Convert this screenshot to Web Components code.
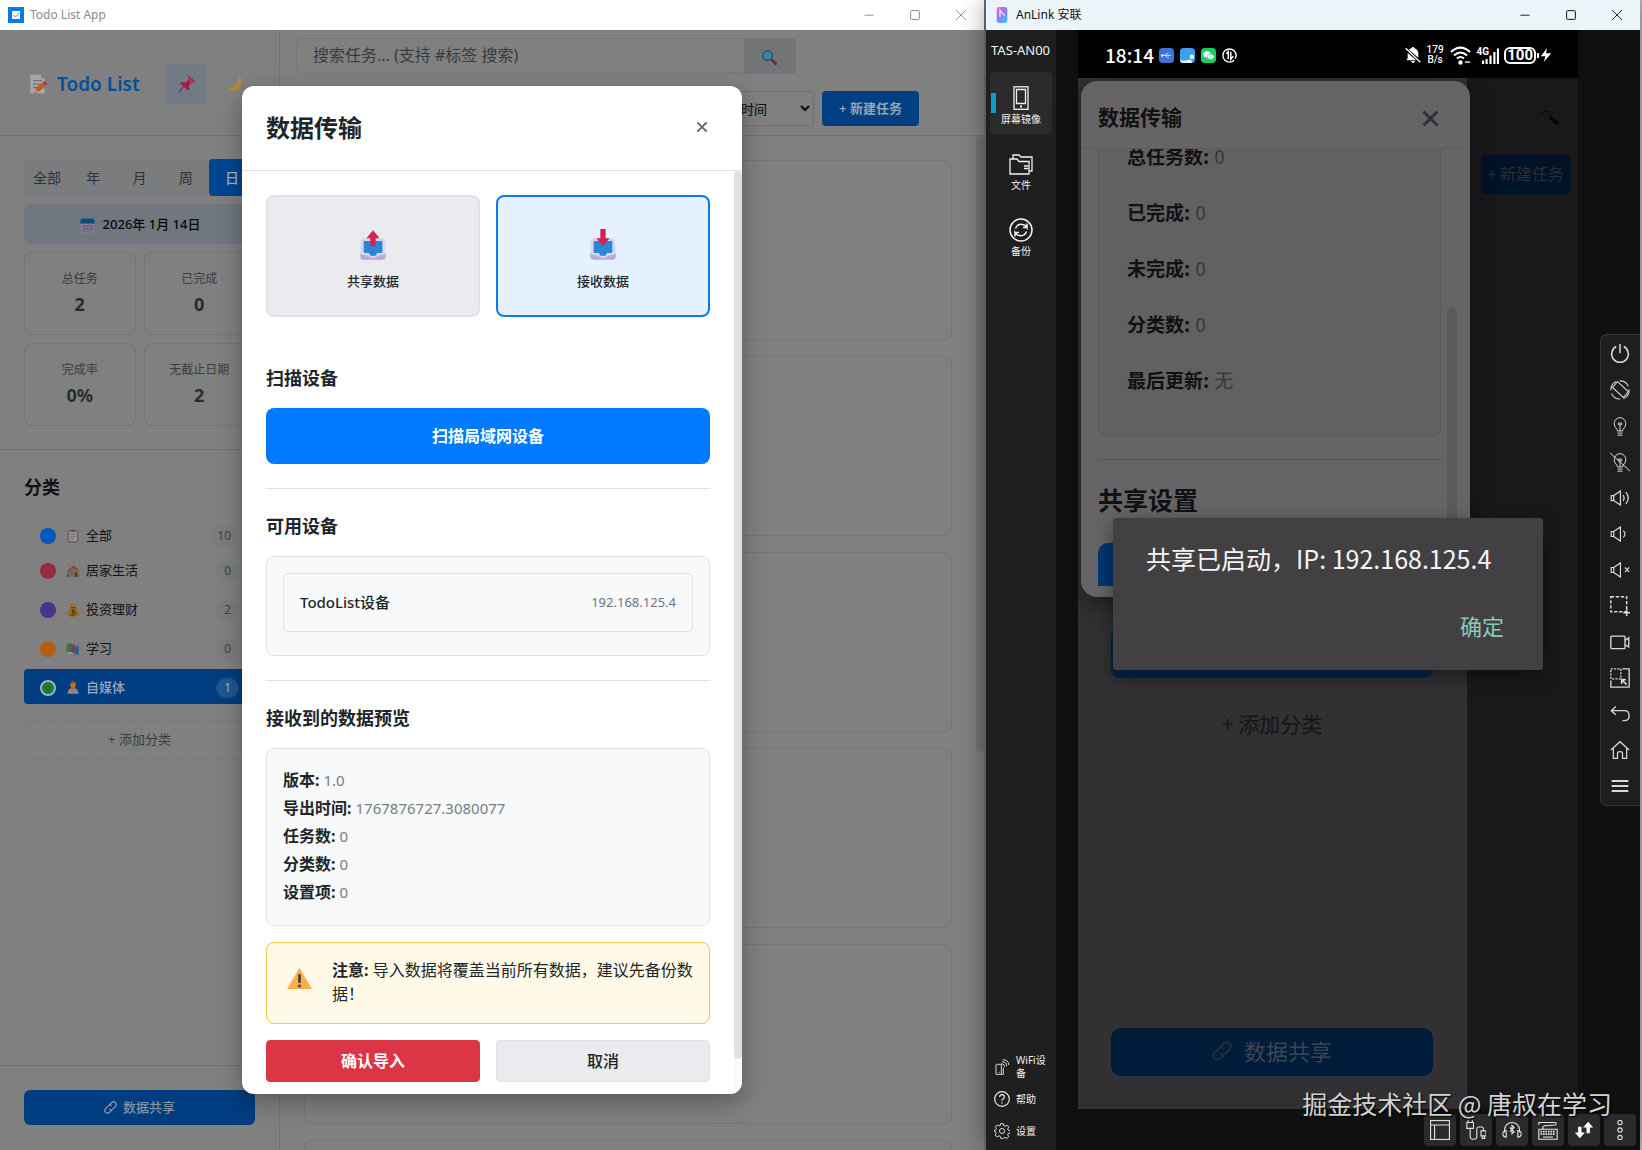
<!DOCTYPE html>
<html lang="zh-CN">
<head>
<meta charset="utf-8">
<title>Todo List App</title>
<style>
  html, body { height: 100%; }
  body { margin: 0; overflow: hidden; background: #b9bcbe; font-family: "Noto Sans", "Noto Sans CJK SC", sans-serif; font-size: 14px; line-height: 1.5; }
</style>
</head>
<body>
<desk-top>
  <todo-window></todo-window>
  <anlink-window></anlink-window>
</desk-top>
<script>
const define = (name, html, setup) => customElements.define(name, class extends HTMLElement {
  constructor() {
    super();
    const t = document.createElement('template');
    t.innerHTML = '<style>*,*::before{box-sizing:border-box}button,input,select{font:inherit;color:inherit;margin:0}button{border:0;background:none;padding:0}h1,h2,h3,p,ul,dl,dd{margin:0;padding:0}ul{list-style:none}</style>' + html;
    this.attachShadow({ mode: 'open' }).append(t.content.cloneNode(true));
  }
  connectedCallback() { if (setup) setup(this, this.shadowRoot); }
});

/* ---------- icons ---------- */
const line = (body, w = 1.5, box = 24) => `<svg viewBox="0 0 ${box} ${box}" fill="none" stroke="currentColor" stroke-width="${w}">${body}</svg>`;
const pic = (body, box = 24) => `<svg viewBox="0 0 ${box} ${box}">${body}</svg>`;
const tray = '<path d="M3 9q0-2 2-2h14q2 0 2 2l1 12q0 2-2 2H4q-2 0-2-2z" fill="#dcd6ea"/><path d="M2 19l1 3q0 1 2 1h14q2 0 2-1l1-3-6 1-3 2h-2l-3-2z" fill="#bba9d6"/><path d="M5 9h14v8q0 1-1 1h-3l-1 2h-4l-1-2H6q-1 0-1-1z" fill="#2a86d8"/>';
const bulb = '<path d="M9 18c0-3-4-4-4-9a7 7 0 0 1 14 0c0 5-4 6-4 9zM9 20.500h6M9 23h6M12 18v-7M10 8.500h4v2h-4z"/>';
const speaker = '<path d="M1.500 9v6h3l8 5.500v-17l-8 5.500zM4.500 9v6"/>';
const ICONS = {
  check: pic('<rect width="16" height="16" fill="#0a78ee"/><rect x="4" y="4" width="8" height="8" fill="#fff"/><path d="M5.500 8l2 2 3.500-4" fill="none" stroke="#4a90d8"/>', 16),
  memo: pic('<path d="M3 1h13l4 4v18H3z" fill="#a9a4ad"/><path d="M16 1l4 4h-4z" fill="#77727c"/><path d="M6 8h11M6 12h10M6 16h7" stroke="#78727d" stroke-width="1.500"/><path d="M7 23l2-6 9-7 4 4-9 7z" fill="#b85a22"/><path d="M18 10l2-1.500 3 3.500-1 2z" fill="#a32c42"/><path d="M7 23l2-6 4 4z" fill="#b78d62"/>'),
  pin: pic('<path d="M10 14l-8 9" stroke="#4e545a" stroke-width="1.800"/><path d="M13 1l10 8-2 2-2-1-4 5 1 4-2 2L4 12l2-2 5 1 4-5-1-2z" fill="#a21c43"/><path d="M13 2l8 7-5 3z" fill="#bd3659"/>'),
  moon: pic('<path d="M16 1c5 6 5 14 0 18S3 23 1 17c7 2 16-3 15-16z" fill="#b08a38"/>'),
  calendar: pic('<rect x="2" y="4" width="20" height="19" rx="3" fill="#85798f"/><path d="M2 9V6q0-4 4-4h12q4 0 4 4v3z" fill="#0c4d7e"/><path d="M6 12h3v2H6zM11 12h3v2h-3zM16 12h3v2h-3zM6 16h3v2H6zM11 16h3v2h-3zM16 16h3v2h-3zM6 20h3v1H6zM11 20h3v1h-3z" fill="#5d5369"/>'),
  clipboard: pic('<rect x="3" y="2" width="18" height="21" rx="2" fill="#765847"/><path d="M5 4h14v17H5z" fill="#9a92a1"/><rect x="8" y="1" width="8" height="4" fill="#5b5660"/><path d="M7 9h10M7 13h10M7 17h7" stroke="#6f6877" stroke-width="1.500"/>'),
  house: pic('<path d="M1 22q0-8 6-8h12q4 0 4 8z" fill="#2f6b40"/><path d="M5 11l8-7 8 7v11H5z" fill="#8b6a4c"/><path d="M2 12L13 2l10 10-2 1-8-7-9 8z" fill="#8c3d3d"/><path d="M15 14h4v8h-4z" fill="#4b3b37"/><path d="M8 13h4v4H8z" fill="#35688a"/>'),
  money: pic('<path d="M9 1h7l2 3-3 4H9L6 4z" fill="#a1702c"/><path d="M9 8h7q7 6 6 12 0 3-4 3H6q-4 0-4-3Q2 13 9 8z" fill="#9d6c29"/><path d="M8 8h8" stroke="#603813" stroke-width="2"/><path d="M15 13q-5-2-5 1t5 2-1 4-5-1M12 11v10" fill="none" stroke="#422c13" stroke-width="1.500"/>'),
  books: pic('<path d="M1 3l9-1v15l-9 1z" fill="#2f7b43"/><path d="M8 4h8v15H8z" fill="#963247"/><path d="M13 8l9-2v15l-9 2z" fill="#315e91"/><path d="M2 17h8v3H3zM10 19h6v2h-6z" fill="#94909a"/>'),
  person: pic('<path d="M6 21v-6q1-5 6-5t6 5v6z" fill="#a45f37"/><circle cx="12" cy="6" r="5" fill="#b87b2d"/><path d="M7 7q0-6 5-6t5 6l-3-3z" fill="#9a551d"/><path d="M5 14h14l3 8H2z" fill="#8b859f"/>'),
  link: line('<path d="M10 7l4-4q4-3 7 0t0 7l-5 5q-3 3-6 0M14 17l-4 4q-4 3-7 0t0-7l5-5q3-3 6 0" />', 2.5),
  magnifier: pic('<path d="M15 15l7 7" stroke="#5b2e52" stroke-width="4" stroke-linecap="round"/><circle cx="9" cy="9" r="7.500" fill="#3a86a2" stroke="#1f506c" stroke-width="2"/>'),
  outbox: pic(tray + '<path d="M12 1l5 6h-3v6h-4V7H7z" fill="#d62352"/>'),
  inbox: pic(tray + '<path d="M10 0h4v7h3l-5 6-5-6h3z" fill="#d62352"/>'),
  warning: pic('<path d="M12 2l12 20H0z" fill="#ffad45"/><path d="M12 8v8M12 18v2.500" stroke="#43413f" stroke-width="2.600"/>'),
  close: line('<path d="M4 4l16 16M20 4L4 20"/>', 3.4),
  anlink: pic('<defs><linearGradient id="g" x2="0.600" y2="1"><stop stop-color="#ff63c8"/><stop offset=".5" stop-color="#9777f5"/><stop offset="1" stop-color="#42b8f4"/></linearGradient></defs><rect x="4" width="16" height="24" rx="4" fill="url(#g)"/><path d="M9 15V5l7 8" fill="none" stroke="#f9ddff" stroke-width="2"/>'),
  phone: line('<rect x="5" y=".8" width="14" height="22.500"/><path d="M7.500 3.500h9v14h-9z"/><path d="M11 20.500h2" stroke-width="2.200"/>', 1.3),
  folder: line('<path d="M1 7h7l2 2.500h10V22H1zM4 7V3h6l2 2h11v14h-3M15 14h4M15 16.500h4"/>', 1.3),
  sync: line('<circle cx="12" cy="12" r="11"/><path d="M6.500 10.500q2-5 7-4 3 .5 4.500 3V5.500M17.500 13.500q-2 5-7 4-3-.5-4.500-3v4M18 9.500h-4M6 14.500h4"/>', 1.5),
  wifidev: line('<path d="M4 8h7v15H3V8M14 13v10h-3M7 20h1.500M11 7q5 0 5 5M12 4q7 0 7 7M13 1q9 0 9 8"/>', 1.3),
  help: line('<circle cx="12" cy="12" r="11"/><path d="M8.500 9q0-3.500 3.500-3.500T15.500 9q0 2-2 3T12 15M12 17v1.800"/>', 1.7),
  gear: line('<circle cx="12" cy="12" r="3.800"/><path d="M10 1h4l.7 3.200 2 .8 2.800-1.700 2.700 2.800-1.600 2.800.7 1.900 3.300.7v3.500l-3.300.7-.8 2 1.700 2.800-2.800 2.700-2.800-1.600-1.900.7L14 23h-4l-.7-3-2-.8-2.800 1.700L1.800 18l1.600-2.700-.8-2L0 12.500V11l2.800-1 .8-2L2 5.500l2.700-2.700 2.800 1.600 1.900-.8z"/>', 1.3),
  power: line('<path d="M12 0v11M7.500 3a10 10 0 1 0 9 0"/>', 1.8),
  rotate: line('<path d="M9 2L22 14l-6 7L3 9z"/><circle cx="12" cy="12" r="11" stroke-dasharray="13 4"/>', 1.3),
  bulb: line(bulb, 1.2),
  bulboff: line(bulb + '<path d="M0 1l24 22"/>', 1.2),
  volup: line(speaker + '<path d="M15.500 8.500q3 3.500 0 7M19 5q6 7 0 14"/>', 1.5),
  voldown: line(speaker + '<path d="M16 8q4 4 0 8"/>', 1.4),
  mute: line(speaker + '<path d="M18 9l5 5.500M23 9l-5 5.500"/>', 1.4),
  region: line('<rect x="1" y="1" width="19" height="18" stroke-dasharray="4 2"/><path d="M20 16v8M16 20h8"/>', 1.8),
  video: line('<rect x="1" y="5" width="17" height="15" rx="1"/><path d="M18 10l4.500-3v11L18 15"/>', 1.6),
  resize: line('<path d="M15 1h8v22H1v-8"/><path d="M1 1h12v12H1z" stroke-dasharray="2.500 1.500"/><path d="M20 20l-5-5M14 19v-5h5" stroke-width="2"/>', 1.6),
  back: line('<path d="M7 3L1.500 8 7 13M1.500 8H17q6 0 6 6t-6 6h-2"/>', 1.6),
  home: line('<path d="M1 12L12 2l11 10M4 10v12h5v-6q0-2 3-2t3 2v6h5V10"/>', 1.5),
  menu: line('<path d="M2 6h20M2 12h20M2 18h20"/>', 2.4),
  layout: line('<rect x=".7" y=".7" width="22.600" height="22.600"/><path d="M1 6h22M5.500 6v17"/>', 1.3),
  cable: line('<path d="M1 3h8v7H1zM2.500 3V0M7.500 3V0M5 10v10q0 3 4 3t4-3v-9q0-3 4-3t4 3v2M18 13h6v6h-6zM19.500 19v3h3v-3"/>', 1.3),
  headset: line('<path d="M3 15V12a9 9 0 0 1 18 0v3M5 12.500v8q-4 0-4-4t4-4zM19 12.500v8q4 0 4-4t-4-4zM9.500 9l5 5-2.500 2.500v-10L14.500 9l-5 5"/>', 1.3),
  keyboard: line('<path d="M1 11h22v12H1zM1 6V3h19q3 0 1 3L8 7q-3 1-2 4"/><path d="M3 14h18M3 17h18" stroke-width="2" stroke-dasharray="2 1"/><path d="M6 20.500h12"/>', 1.3),
  updown: pic('<path d="M5 8h4v7h4l-6 7-6-7h4zM15 16h4V9h4l-6-7-6 7h4z" fill="#fff"/>'),
  more: line('<circle cx="12" cy="3" r="2.600"/><circle cx="12" cy="12" r="2.600"/><circle cx="12" cy="21" r="2.600"/>', 1.3),
  usb: pic('<rect width="24" height="24" rx="6" fill="#3c74d8"/><path d="M4 12h15M8 12l4-3h3M10 12l3 3h3" fill="none" stroke="#e2ecff" stroke-width="1.300"/><circle cx="5" cy="12" r="2" fill="#e2ecff"/>'),
  sky: pic('<rect width="24" height="24" rx="6" fill="#3f9ee9"/><circle cx="19" cy="14" r="3.500" fill="#fff"/><path d="M0 19q8 2 12 0t8 3l-2 2H6q-6 0-6-5z" fill="#e8f6ff"/>'),
  wechat: pic('<rect width="24" height="24" rx="6" fill="#18cf62"/><ellipse cx="9.500" cy="10" rx="6" ry="5" fill="#fff"/><ellipse cx="15.500" cy="14" rx="5.500" ry="4.500" fill="#e9fff1" stroke="#18cf62"/>'),
  data: line('<circle cx="12" cy="12" r="10.500"/><path d="M10 18V6L7 9M14 6v12l4-5" stroke-width="2.400"/><path d="M17 17h7v7" fill="#000" stroke="none"/>', 2.2),
  belloff: pic('<path d="M6 4q2-2 4-2l1-2h2l1 2q5 1 6 7v7zM4 9v8l-2 3h15zM9 21h6q-1 3-3 3t-3-3z" fill="#fff"/><path d="M1 2l22 21" stroke="#fff" stroke-width="2"/>'),
  wifi: line('<path d="M1 8Q12-2 23 8M4.500 12q7.500-7 15 0M8 15.500q4-3.500 8 0" stroke-width="2.200"/><circle cx="12" cy="20" r="2.500" fill="#fff" stroke="none"/><path d="M17 19.500h6" stroke-width="1.500"/>'),
  signal: pic('<path d="M0 19h3v5H0zM5 17h3v7H5zM10.500 12h3v12h-3zM16 7h3v17h-3zM21 2h3v22h-3z" fill="#fff"/>'),
  bolt: pic('<path d="M14 0L3 14h8l-3 10 13-15h-9z" fill="#fff"/>'),
  min: line('<path d="M1 12.500h22"/>', 2.2), max: line('<rect x="1.500" y="1.500" width="21" height="21" rx="2"/>', 2.4), quit: line('<path d="M0 0l24 24M24 0L0 24"/>', 2.2),
};
define('ui-icon', `<style>:host{display:inline-block;flex:none;width:var(--s,16px);height:var(--s,16px)}svg{display:block;width:100%;height:100%}</style><span></span>`,
  (el, root) => { root.querySelector('span').innerHTML = ICONS[el.getAttribute('name')] || ''; });

/* ---------- shared window chrome ---------- */
define('desk-top', `<style>:host{display:grid;grid-template-columns:minmax(0,1fr) 656px;grid-template-rows:minmax(0,1fr);height:100vh;overflow:hidden}</style><slot></slot>`);

define('title-bar', `<style>
  :host{display:flex;align-items:center;height:30px;flex:none;font-size:12px;padding-left:8px}
  .label{flex:1;white-space:nowrap;line-height:18px;padding:0 0 1px 6px}
  button{width:46px;height:28px;display:grid;place-items:center}
  ui-icon{--s:10px} ::slotted(ui-icon){--s:16px}
</style><slot name="icon"></slot><span class="label"><slot></slot></span>
<button aria-label="最小化"><ui-icon name="min"></ui-icon></button><button aria-label="最大化"><ui-icon name="max"></ui-icon></button><button aria-label="关闭"><ui-icon name="quit"></ui-icon></button>`);

/* ---------- todo app ---------- */
define('stat-card', `<style>
  :host{display:flex;flex-direction:column;align-items:center;height:83px;padding-top:17px;border:1px solid #747577;border-radius:8px;box-sizing:border-box}
  span{font-size:12px;line-height:18px;color:#393d41} b{font-size:18px;font-weight:700;line-height:27px;color:#2a2c2e;margin-top:3px}
</style><span></span><b></b>`, (el, r) => { r.querySelector('span').textContent = el.getAttribute('label'); r.querySelector('b').textContent = el.getAttribute('value'); });

define('category-item', `<style>
  :host{display:flex;align-items:center;height:35px;box-sizing:border-box;padding:2px 16px 0;border-radius:4px;font-size:13px;color:#111315}
  :host([active]){background:#003d80;color:#9aa9ba;font-weight:500}
  i{width:16px;height:16px;border-radius:50%;background:var(--dot);margin-right:10px;flex:none;box-sizing:border-box}
  :host([active]) i{border:2px solid #a8b2b8}
  ui-icon{--s:14px;margin-right:6px}
  .name{flex:1}
  .count{font-size:12px;line-height:20px;padding:0 8px;border-radius:10px;background:#7a7c7e;color:#3d4145;font-weight:400}
  :host([active]) .count{background:#205591;color:#a3afbb}
</style><i></i><ui-icon></ui-icon><span class="name"><slot></slot></span><span class="count"></span>`,
  (el, r) => { r.querySelector('.count').textContent = el.getAttribute('count'); const s = r.querySelector('ui-icon'); s.setAttribute('name', el.getAttribute('icon')); s.connectedCallback(); });

define('todo-sidebar', `<style>
  :host{display:flex;flex-direction:column;width:280px;flex:none;border-right:1px solid #727375;box-sizing:border-box}
  header{height:106px;border-bottom:1px solid #6f7173;display:flex;align-items:center;padding:2px 25px 0 28px;flex:none}
  h1{font-size:19px;font-weight:600;color:#00509b;margin-left:9px;flex:1;white-space:nowrap;line-height:28px}
  header>ui-icon{--s:20px} header button{width:40px;height:40px;border-radius:4px;display:grid;place-items:center}
  header button ui-icon{--s:19px} .pin{background:#727b85;margin-right:8px}
  .moon{justify-items:start;padding-left:12px}
  .stats{padding:23px 24px;border-bottom:1px solid #6f7173;display:flex;flex-direction:column;gap:8px}
  .tabs{display:flex;background:#7a7c7d;border-radius:4px;height:37px}
  .tabs button{flex:1;color:#2f3336;font-size:14px;border-radius:4px}
  .tabs .on{background:#00458f;color:#a5b0bd;font-weight:500}
  .date{height:40px;border-radius:6px;background:#71777f;display:flex;align-items:center;justify-content:center;gap:7px;font-size:13px;font-weight:500;color:#08090a;padding-top:2px}
  .date ui-icon{--s:17px}
  .grid{display:grid;grid-template-columns:1fr 1fr;gap:8px}
  .cats{padding:24px;display:flex;flex-direction:column;gap:4px}
  h2{font-size:18px;line-height:27px;font-weight:700;color:#111315;margin-bottom:12px}
  .add{height:40px;border:1px dashed #76787a;border-radius:4px;color:#3a3e42;font-size:13px;margin-top:12px}
  footer{margin-top:auto;border-top:1px solid #6f7173;padding:24px 24px 25px}
  footer button{width:100%;height:35px;border-radius:6px;background:#003d80;color:#8594a5;font-size:13px;font-weight:500;display:flex;align-items:center;justify-content:center;gap:6px}
  footer ui-icon{--s:13px}
</style>
<header><ui-icon name="memo"></ui-icon><h1>Todo List</h1><button class="pin" aria-label="置顶"><ui-icon name="pin"></ui-icon></button><button class="moon" aria-label="深色模式"><ui-icon name="moon"></ui-icon></button></header>
<section class="stats">
  <div class="tabs"><button>全部</button><button>年</button><button>月</button><button>周</button><button class="on">日</button></div>
  <div class="date"><ui-icon name="calendar"></ui-icon>2026年 1月 14日</div>
  <div class="grid"><stat-card label="总任务" value="2"></stat-card><stat-card label="已完成" value="0"></stat-card><stat-card label="完成率" value="0%"></stat-card><stat-card label="无截止日期" value="2"></stat-card></div>
</section>
<section class="cats"><h2>分类</h2>
  <div><category-item style="--dot:#0059bd" icon="clipboard" count="10">全部</category-item>
  <category-item style="--dot:#982b3d" icon="house" count="0">居家生活</category-item></div>
  <category-item style="--dot:#4a318c" icon="money" count="2">投资理财</category-item>
  <category-item style="--dot:#b55e0e" icon="books" count="0">学习</category-item>
  <category-item style="--dot:#17783a" icon="person" count="1" active>自媒体</category-item>
  <button class="add">+ 添加分类</button>
</section>
<footer><button><ui-icon name="link"></ui-icon>数据共享</button></footer>`);

define('todo-main', `<style>
  :host{display:flex;flex-direction:column;flex:1;min-width:0;min-height:0}
  header{height:106px;flex:none;border-bottom:1px solid #6f7173;padding:8px 16px 0;display:flex;flex-direction:column;gap:17px}
  .search{display:flex;height:36px;width:500px;border:1px solid #737577;border-radius:4px;overflow:hidden}
  input{flex:1;min-width:0;background:none;border:0;padding:0 16px 2px;font-size:16px;line-height:24px}
  input::placeholder{color:#383b3e;opacity:1}
  .search button{width:51px;background:#727578;display:grid;place-items:center;padding-top:2px}
  .search ui-icon{--s:15px}
  .tools{display:flex;gap:8px;height:35px;width:623px;justify-content:flex-end}
  select{width:114px;background:#808080;border:1px solid #6f7173;border-radius:4px;font-size:13px;color:#08090a;padding:0 0 0 10px}
  .new{width:97px;background:#003f82;color:#98a4b2;border-radius:4px;font-size:13px;font-weight:600;padding-top:1px}
  .scroll{display:flex;flex:1;min-height:0}
  .list{flex:1;overflow:hidden;padding:24px;display:flex;flex-direction:column;gap:16px}
  article{height:180px;flex:none;border:1px solid #747577;border-radius:8px}
  .rail{width:8px} .thumb{height:616px;background:#727577;border-radius:4px}
</style>
<header>
  <div class="search"><input aria-label="搜索任务" placeholder="搜索任务... (支持 #标签 搜索)"><button aria-label="搜索"><ui-icon name="magnifier"></ui-icon></button></div>
  <div class="tools"><select aria-label="排序"><option>创建时间</option></select><button class="new">+ 新建任务</button></div>
</header>
<div class="scroll"><div class="list"><article></article><article></article><article></article><article></article><article></article><article></article></div><div class="rail"><div class="thumb"></div></div></div>`);

define('mode-card', `<style>
  :host{display:block;flex:1}
  button{width:100%;height:122px;border:2px solid #dee2e6;border-radius:8px;background:#e9ebee;display:flex;flex-direction:column;align-items:center;padding-top:32px;gap:10px;font-size:13px;font-weight:500;line-height:20px;color:#212529}
  :host([active]) button{border-color:#0a7be8;background:#e6f1ff}
  ui-icon{--s:32px}
</style><button><ui-icon></ui-icon><span><slot></slot></span></button>`, (el, r) => { const s = r.querySelector('ui-icon'); s.setAttribute('name', el.getAttribute('icon')); s.connectedCallback(); });

define('transfer-dialog', `<style>
  :host{display:flex;flex-direction:column;width:500px;max-height:90%;background:#fff;border-radius:12px;overflow:hidden;color:#212529;box-shadow:0 8px 24px rgba(0,0,0,.3)}
  header{display:flex;align-items:center;justify-content:space-between;padding:24px;border-bottom:1px solid #dee2e6;flex:none}
  header h2{font-size:24px;line-height:36px;font-weight:600}
  header button{width:32px;height:32px;display:grid;place-items:center;color:#63696f;--s:14px;padding-bottom:2px}
  .scroll{display:flex;min-height:0}
  .body{flex:1;min-width:0;overflow:hidden;padding:24px}
  .rail{width:8px;background:#f9fbfb;padding-bottom:35px}.thumb{height:100%;background:#dfe2e5;border-radius:4px}
  .modes{display:flex;gap:16px;margin-bottom:48px}
  h3{font-size:18px;line-height:27px;font-weight:600;margin-bottom:16px}
  .scan{width:100%;height:56px;border-radius:8px;background:#007bff;color:#fff;font-size:16px;font-weight:600;display:block}
  hr{border:0;border-top:1px solid #dee2e6;margin:24px 0}
  .box{border:1px solid #dee2e6;border-radius:8px;background:#f8f9fb;padding:16px}
  .devices{height:100px}
  .device{display:flex;align-items:center;justify-content:space-between;height:59px;border:1px solid #dee2e6;border-radius:4px;padding:0 16px;font-size:15px;font-weight:500}
  .device small{font-size:13px;font-weight:400;color:#6c757d}
  dl.box{padding:17px 16px 19px;margin-bottom:16px}
  dl div{display:flex;align-items:center;gap:4px;height:28px}
  dt{font-size:16px;font-weight:700}dd{font-size:15px;color:#777d83}
  .warn{display:flex;align-items:center;height:82px;border:1px solid #f2c94f;border-radius:8px;background:#fff9e7;padding:0 14px 2px 20px;font-size:16px;line-height:24px;margin-bottom:16px}
  .warn ui-icon{--s:25px;margin:0 20px 8px 0}.warn p{flex:1}
  .actions{display:flex;gap:16px}
  .actions button{flex:1;height:42px;border-radius:4px;background:#e9ebee;border:1px solid #dee2e6;font-size:16px;font-weight:500}
  .actions .ok{background:#dc3545;border-color:#dc3545;color:#fff;font-weight:600}
</style>
<header><h2>数据传输</h2><button aria-label="关闭"><ui-icon name="close"></ui-icon></button></header>
<div class="scroll"><div class="body">
  <div class="modes"><mode-card icon="outbox">共享数据</mode-card><mode-card icon="inbox" active>接收数据</mode-card></div>
  <h3>扫描设备</h3><button class="scan">扫描局域网设备</button><hr>
  <h3>可用设备</h3><div class="box devices"><div class="device"><span>TodoList设备</span><small>192.168.125.4</small></div></div><hr>
  <h3>接收到的数据预览</h3>
  <dl class="box"><div><dt>版本:</dt><dd>1.0</dd></div><div><dt>导出时间:</dt><dd>1767876727.3080077</dd></div><div><dt>任务数:</dt><dd>0</dd></div><div><dt>分类数:</dt><dd>0</dd></div><div><dt>设置项:</dt><dd>0</dd></div></dl>
  <div class="warn"><ui-icon name="warning"></ui-icon><p><strong>注意:</strong> 导入数据将覆盖当前所有数据，建议先备份数据！</p></div>
  <div class="actions"><button class="ok">确认导入</button><button>取消</button></div>
</div><div class="rail"><div class="thumb"></div></div></div>`);

define('todo-window', `<style>
  :host{display:flex;flex-direction:column;background:#808080;border-right:2px solid #6f7173;min-width:0;min-height:0;box-sizing:border-box}
  title-bar{background:#fff;color:#8b8b8b}
  .app{flex:1;display:flex;min-height:0;position:relative}
  .overlay{position:absolute;inset:0;display:flex;align-items:center;justify-content:center}
</style>
<title-bar><ui-icon slot="icon" name="check"></ui-icon>Todo List App</title-bar>
<div class="app"><todo-sidebar></todo-sidebar><todo-main></todo-main><div class="overlay"><transfer-dialog></transfer-dialog></div></div>`);

/* ---------- AnLink ---------- */
define('anlink-nav', `<style>
  :host{display:flex;flex-direction:column;width:70px;flex:none;background:#1f1f1f;color:#f2f2f2;box-sizing:border-box;padding:11px 4px 3px}
  .name{font-size:13px;line-height:18px;margin-bottom:13px;padding-left:1px;white-space:nowrap}
  .item{width:62px;height:62px;margin-bottom:4px;border-radius:4px;display:flex;flex-direction:column;align-items:center;padding-top:14px;gap:1px;font-size:10px;line-height:16px;--s:24px;white-space:nowrap}
  .on{background:linear-gradient(#0a9ccc,#0a9ccc) 1px 21px/5px 20px no-repeat #2b2b2b}
  .low{display:flex;align-items:center;gap:6px;text-align:left;padding-left:4px;font-size:10px;line-height:13px;height:32px;--s:16px}
  .low span{width:34px}
  .bottom{margin-top:auto}
</style><div class="name">TAS-AN00</div>
<button class="item on"><ui-icon name="phone"></ui-icon><span>屏幕镜像</span></button><button class="item"><ui-icon name="folder"></ui-icon><span>文件</span></button><button class="item"><ui-icon name="sync"></ui-icon><span>备份</span></button>
<div class="bottom"><button class="low"><ui-icon name="wifidev"></ui-icon><span>WiFi设备</span></button><button class="low"><ui-icon name="help"></ui-icon><span>帮助</span></button><button class="low"><ui-icon name="gear"></ui-icon><span>设置</span></button></div>`);

define('phone-status', `<style>
  :host{display:flex;align-items:center;height:48px;flex:none;background:#000;color:#fff;padding:2px 25px 0 27px;gap:6px;box-sizing:border-box;font-family:Roboto,sans-serif}
  time{font-size:19px;font-weight:500;font-family:"Noto Sans CJK SC",sans-serif;line-height:24px}
  .apps{display:flex;gap:6px;--s:15px;margin-left:-1px}
  .sp{flex:1}.rate{font-size:10px;line-height:10px;font-weight:500;text-align:center}
  .wifi{--s:21px}.net{display:flex;align-items:flex-end;--s:19px}.net small{font-size:10px;line-height:10px;font-weight:700;align-self:flex-start;margin-right:-8px}
  .net ui-icon{height:17px}
  .bat{border:2px solid #fff;border-radius:6px;font-size:15px;line-height:13px;height:17px;padding:0 1px;font-weight:700;margin-left:-2px}
  .nub{width:2px;height:5px;background:#fff;margin-left:-5px}
  .bolt{--s:14px;margin-left:-6px}
</style><time>18:14</time><span class="apps"><ui-icon name="usb"></ui-icon><ui-icon name="sky"></ui-icon><ui-icon name="wechat"></ui-icon><ui-icon name="data"></ui-icon></span><span class="sp"></span>
<ui-icon name="belloff"></ui-icon><span class="rate">179<br>B/s</span><ui-icon class="wifi" name="wifi"></ui-icon><span class="net"><small>4G</small><ui-icon name="signal"></ui-icon></span><span class="bat">100</span><i class="nub"></i><ui-icon class="bolt" name="bolt"></ui-icon>`);

define('phone-sheet', `<style>
  :host{display:flex;flex-direction:column;background:#666466;color:#101112;border-radius:16px;overflow:hidden;padding-bottom:11px;box-sizing:border-box;box-shadow:0 8px 24px rgba(0,0,0,.35)}
  header{height:68px;flex:none;display:flex;align-items:center;justify-content:space-between;padding:7px 30px 0 17px;border-bottom:1px solid #5d5c5d}
  h2{font-size:21px;line-height:32px;font-weight:600;margin-bottom:4px}header ui-icon{--s:21px;color:#2e3236}header button{display:grid;margin-right:-1px}
  .scroll{flex:1;min-height:0;display:flex;overflow:hidden}
  .body{flex:1;min-width:0;overflow:hidden;padding:0 6px 0 17px}
  dl{margin-top:-22px;background:#616161;border:1px solid #5a5a5b;border-radius:8px;padding:0 28px 28px}
  dl div{display:flex;align-items:center;gap:5px;height:56px;font-size:19px}dt{font-weight:600}dd{color:#37393b}
  hr{border:0;border-top:1px solid #555456;margin:22px 0 20px}
  h3{font-size:25px;line-height:38px;font-weight:600}
  .go{display:block;width:100%;height:60px;margin-top:25px;border-radius:10px;background:#00376f}
  .rail{width:23px;padding-top:158px}.thumb{width:10px;height:100%;border-radius:5px 5px 0 0;background:#5b5a5b}
</style><header><h2>数据传输</h2><button aria-label="关闭"><ui-icon name="close"></ui-icon></button></header>
<div class="scroll"><div class="body"><dl><div><dt>总任务数:</dt><dd>0</dd></div><div><dt>已完成:</dt><dd>0</dd></div><div><dt>未完成:</dt><dd>0</dd></div><div><dt>分类数:</dt><dd>0</dd></div><div><dt>最后更新:</dt><dd>无</dd></div></dl><hr><h3>共享设置</h3><button class="go" aria-label="启动共享"></button></div><div class="rail"><div class="thumb"></div></div></div>`);

define('phone-alert', `<style>
  :host{display:flex;flex-direction:column;background:#434043;border-radius:3px;height:152px;box-sizing:border-box;padding:21px 34px 28px 33px;box-shadow:0 6px 20px rgba(0,0,0,.4)}
  p{font-size:25px;line-height:38px;color:#f5f5f5;white-space:nowrap}
  button{align-self:flex-end;margin-top:auto;margin-right:5px;font-size:22px;line-height:34px;color:#84cdb8}
</style><p>共享已启动，IP: 192.168.125.4</p><button>确定</button>`);

define('phone-screen', `<style>
  :host{display:flex;flex-direction:column;flex:1;margin:0 62px 41px 22px;font-family:"Noto Sans CJK SC",sans-serif;position:relative;min-width:0}
  .page{flex:1;display:flex;background:#19181b;position:relative;min-height:0}
  .left{flex:1;background:#323032;padding:0 34px 33px 33px;display:flex;flex-direction:column;align-items:stretch}
  .active{height:50px;margin-top:550px;border-radius:8px;background:#00244a;flex:none}
  .add{font-size:21px;line-height:30px;color:#151617;margin-top:30px}
  .share{height:48px;margin-top:auto;border-radius:10px;background:#001c3b;color:#3b4653;font-size:22px;display:flex;align-items:center;justify-content:center;gap:12px;padding-bottom:3px}
  .share ui-icon{--s:20px;color:#252c33}
  .right{width:111px;display:flex;flex-direction:column;padding:28px 8px 0 14px}
  .find{align-self:flex-end;width:38px;height:24px;color:#060606}
  .new{height:39px;margin-top:25px;border-radius:4px;background:#001226;color:#292d35;font-size:16px;white-space:nowrap;padding-bottom:4px}
  phone-sheet{position:absolute;left:3px;right:108px;top:3px;height:516px}
  phone-alert{position:absolute;left:35px;right:35px;top:440px}
</style><phone-status></phone-status>
<div class="page"><div class="left"><div class="active"></div><button class="add">+ 添加分类</button><button class="share"><ui-icon name="link"></ui-icon>数据共享</button></div>
<div class="right"><button class="find" aria-label="搜索"><svg width="24" height="24" viewBox="0 0 24 24" fill="none" stroke="currentColor" stroke-width="1"><path d="M2 8q6-6 11 1"/><path d="M11 11l8 7" stroke-width="3"/></svg></button><button class="new">+ 新建任务</button></div>
<phone-sheet></phone-sheet><phone-alert></phone-alert></div>`);

define('side-tools', `<style>:host{display:flex;flex-direction:column;background:#1e1e1e;border:1px solid #363636;border-right:0;border-radius:7px 0 0 7px;padding:1px 2px 1px 0;color:#d8d8d8;box-sizing:border-box;width:40px}
  button{height:36px;display:grid;place-items:center;--s:20px}</style>`, (el, r) => {
  for (const [n, t] of [['power','电源'],['rotate','旋转'],['bulb','亮屏'],['bulboff','熄屏'],['volup','音量加'],['voldown','音量减'],['mute','静音'],['region','截图'],['video','录屏'],['resize','缩放'],['back','返回'],['home','主页'],['menu','菜单']])
    r.innerHTML += `<button aria-label="${t}"><ui-icon name="${n}"></ui-icon></button>`;
});
define('bottom-tools', `<style>:host{display:flex;gap:4px;color:#e4e4e4}
  button{width:32px;height:32px;display:grid;place-items:center;--s:20px;background:#2b2b2b;border-radius:4px}</style>`, (el, r) => {
  for (const [n, t] of [['layout','布局'],['cable','连接'],['headset','音频'],['keyboard','键盘'],['updown','传输'],['more','更多']])
    r.innerHTML += `<button aria-label="${t}"><ui-icon name="${n}"></ui-icon></button>`;
});

define('anlink-window', `<style>
  :host{display:flex;flex-direction:column;background:#101010;margin-right:2px;box-shadow:0 0 24px rgba(0,0,0,.4);z-index:1;min-width:0;min-height:0;position:relative}
  title-bar{background:#ebf5f9;color:#111}
  .app{flex:1;display:flex;min-height:0;position:relative}
  side-tools{position:absolute;right:0;top:304px}
  bottom-tools{position:absolute;right:4px;bottom:4px}
  .mark{position:absolute;right:28px;bottom:28px;font:25px/38px "Noto Sans CJK SC",sans-serif;color:#d2d2d2;text-shadow:1px 1px 2px #000;white-space:nowrap}
</style><title-bar><ui-icon slot="icon" name="anlink"></ui-icon>AnLink 安联</title-bar>
<div class="app"><anlink-nav></anlink-nav><phone-screen></phone-screen><side-tools></side-tools><bottom-tools></bottom-tools><div class="mark">掘金技术社区 @ 唐叔在学习</div></div>`);
</script>
</body>
</html>
